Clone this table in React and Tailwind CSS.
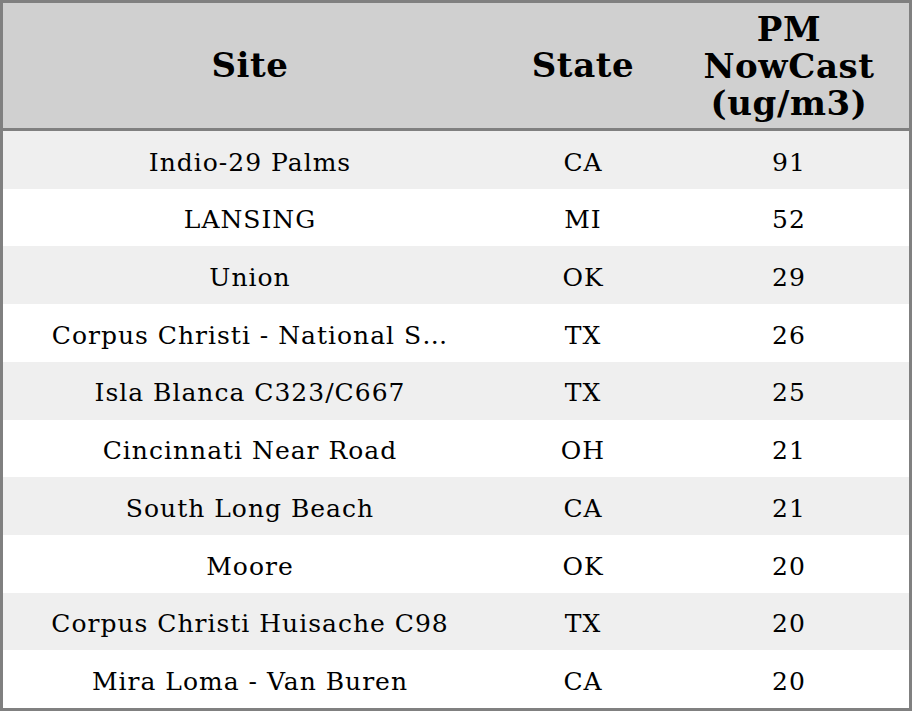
const ROWS = [
  ['Indio-29 Palms', 'CA', '91'],
  ['LANSING', 'MI', '52'],
  ['Union', 'OK', '29'],
  ['Corpus Christi - National S…', 'TX', '26'],
  ['Isla Blanca C323/C667', 'TX', '25'],
  ['Cincinnati Near Road', 'OH', '21'],
  ['South Long Beach', 'CA', '21'],
  ['Moore', 'OK', '20'],
  ['Corpus Christi Huisache C98', 'TX', '20'],
  ['Mira Loma - Van Buren', 'CA', '20'],
]

export default function App() {
  return (
    <div className="w-[912px] h-[711px] bg-white font-['DejaVu_Serif',serif] text-black">
      <div className="border-[3px] border-[#808080] h-full flex flex-col">
        {/* Header */}
        <div className="grid grid-cols-[494px_172px_1fr] h-[128px] shrink-0 bg-[#d0d0d0] border-b-[3px] border-[#808080] font-bold text-[34px] leading-[37px] tracking-[0.6px] text-center">
          <div className="flex items-center justify-center">Site</div>
          <div className="flex items-center justify-center">State</div>
          <div className="flex items-center justify-center pt-[2px]">
            <span>PM<br />NowCast<br />(ug/m3)</span>
          </div>
        </div>

        {/* Rows */}
        <div className="flex-1 flex flex-col">
          {ROWS.map((r, i) => (
            <div
              key={i}
              className={`grid grid-cols-[494px_172px_1fr] flex-1 pt-[5px] text-[25px] tracking-[1px] text-center items-center ${i % 2 === 0 ? 'bg-[#efefef]' : 'bg-white'}`}
            >
              <div className="whitespace-nowrap">{r[0]}</div>
              <div>{r[1]}</div>
              <div>{r[2]}</div>
            </div>
          ))}
        </div>
      </div>
    </div>
  )
}
